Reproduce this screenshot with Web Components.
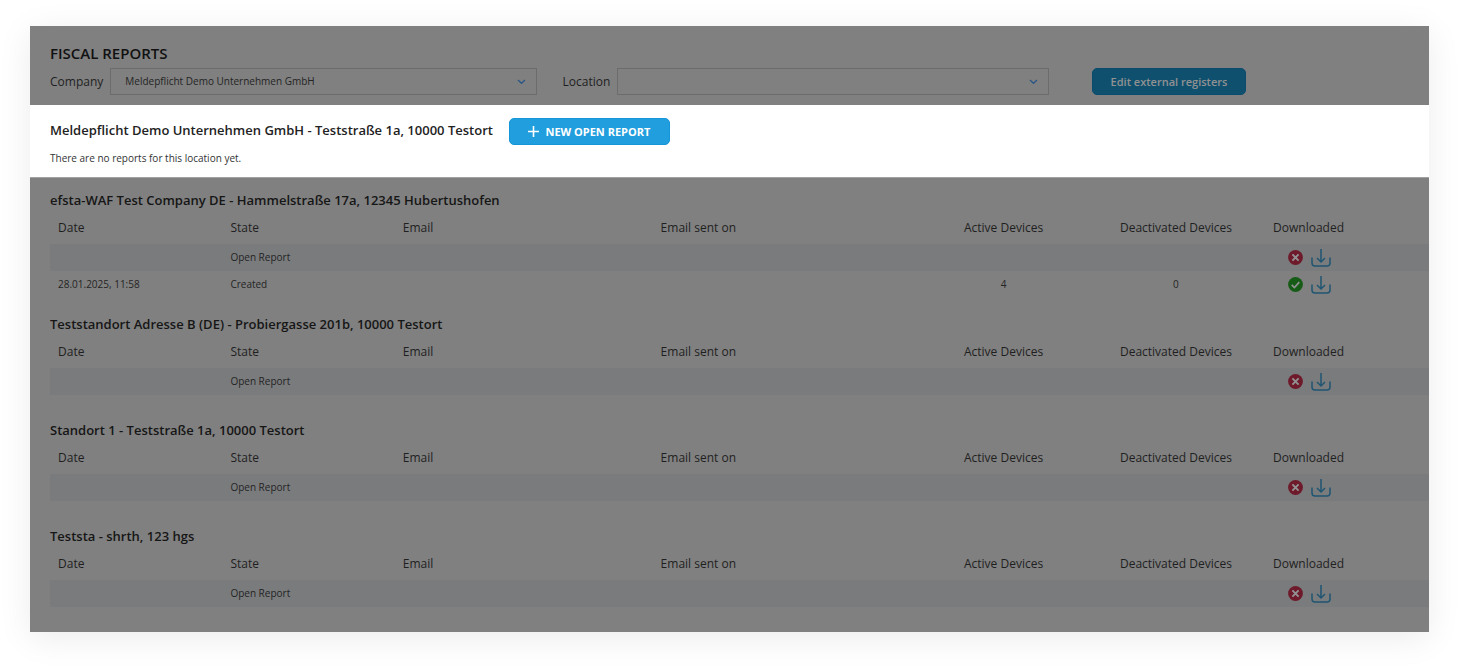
<!DOCTYPE html>
<html lang="en">
<head>
<meta charset="utf-8">
<title>Fiscal Reports</title>
<style>
  body { margin: 0; background: #fff; font-family: "Open Sans", "Noto Sans", sans-serif; color: #1c1c1c; }
</style>
</head>
<body>
<fiscal-page>
  <report-filters slot="filters">
    <select-field label="Company" value="Meldepflicht Demo Unternehmen GmbH"></select-field>
    <select-field label="Location" value=""></select-field>
    <app-button slot="action" muted>Edit external registers</app-button>
  </report-filters>
  <active-location slot="active">
    <span slot="name">Meldepflicht Demo Unternehmen GmbH - Teststraße 1a, 10000 Testort</span>
    <app-button slot="action" plus>NEW OPEN REPORT</app-button>
    <span slot="message">There are no reports for this location yet.</span>
  </active-location>
  <location-reports rows='[["","Open Report","","","","","no"],["28.01.2025, 11:58","Created","","","4","0","yes"]]'>efsta-WAF Test Company DE - Hammelstraße 17a, 12345 Hubertushofen</location-reports>
  <location-reports rows='[["","Open Report","","","","","no"]]'>Teststandort Adresse B (DE) - Probiergasse 201b, 10000 Testort</location-reports>
  <location-reports rows='[["","Open Report","","","","","no"]]'>Standort 1 - Teststraße 1a, 10000 Testort</location-reports>
  <location-reports rows='[["","Open Report","","","","","no"]]'>Teststa - shrth, 123 hgs</location-reports>
</fiscal-page>

<script>
  const define = (name, render) => customElements.define(name, class extends HTMLElement {
    connectedCallback() {
      if (!this.shadowRoot) this.attachShadow({ mode: "open" }).innerHTML = render(this);
    }
  });

  define("fiscal-page", () => `
    <style>
      :host { display: block; padding: 26px 30px 35px; }
      main { background: #808080; box-shadow: 0 6px 32px rgba(0,0,0,.08); }
      .list { padding: 11px 0 1px 20px; border-top: 1px solid #a2a2a2; }
    </style>
    <main>
      <slot name="filters"></slot>
      <slot name="active"></slot>
      <div class="list"><slot></slot></div>
    </main>`);

  define("report-filters", () => `
    <style>
      :host { display: block; padding: 15px 0 10px 20px; }
      h1 { margin: 0; font-size: 15px; line-height: 24px; font-weight: 600; color: #111; }
      .bar { display: flex; align-items: center; margin-top: 3px; }
      .fields { display: flex; flex: 1; gap: 26px; }
      .action { flex: none; width: 380px; padding-left: 43px; box-sizing: border-box; }
    </style>
    <h1>FISCAL REPORTS</h1>
    <div class="bar">
      <div class="fields"><slot></slot></div>
      <div class="action"><slot name="action"></slot></div>
    </div>`);

  define("select-field", el => `
    <style>
      :host { display: flex; flex: 1 1 0; min-width: 0; align-items: center; gap: 7px; }
      label { font-size: 12px; line-height: 26px; color: #1f1f1f; }
      .box { flex: 1; min-width: 0; display: grid; align-items: center; }
      select { grid-area: 1 / 1; appearance: none; width: 100%; height: 27px; margin: 0; padding: 0 32px 2px 14px;
        border: 1px solid #6c6c6c; border-radius: 0; background: #808080; color: #242424; font: 10px/20px "Open Sans", sans-serif; }
      svg { grid-area: 1 / 1; justify-self: end; margin-right: 11px; pointer-events: none; }
    </style>
    <label for="s">${el.getAttribute("label")}</label>
    <div class="box">
      <select id="s"><option>${el.getAttribute("value")}</option></select>
      <svg width="9" height="6" viewBox="0 0 9 6" fill="none" stroke="#2a5684" stroke-width="1.3"><path d="M1 1l3.500 3.300L8 1"/></svg>
    </div>`);

  define("app-button", el => `
    <style>
      :host { display: inline-block; }
      button { display: flex; align-items: center; justify-content: center; gap: 6px; height: 27px; margin: 0; padding: 0 16px;
        border: 1px solid #1496d8; border-radius: 5px; background: #219edd; color: #fff; font: 700 11px/20px "Open Sans", sans-serif; white-space: nowrap; }
      :host([muted]) button { background: #10506f; border-color: #0b4c6e; color: #929292; width: 154px; font-weight: 600; }
      :host([plus]) button { width: 161px; }
      svg { flex: none; }
    </style>
    <button type="button">${el.hasAttribute("plus") ? `<svg width="11" height="11" viewBox="0 0 11 11" stroke="#fff" stroke-width="1.6"><path d="M5.500 0v11M0 5.500h11"/></svg>` : ""}<slot></slot></button>`);

  define("active-location", () => `
    <style>
      :host { display: block; padding: 13px 0 9px 20px; background: #fff; }
      .top { display: flex; align-items: start; gap: 16px; }
      h2 { margin: 0; font-size: 13px; line-height: 25px; font-weight: 600; color: #222; }
      p { margin: 3px 0 0; font-size: 10px; line-height: 20px; color: #333; }
    </style>
    <div class="top"><h2><slot name="name"></slot></h2><slot name="action"></slot></div>
    <p><slot name="message"></slot></p>`);

  define("status-mark", el => {
    const ok = el.hasAttribute("ok");
    return `
    <style>:host { display: block; width: 15px; height: 15px; } svg { display: block; }</style>
    <svg width="15" height="15" viewBox="0 0 15 15" fill="none" role="img" aria-label="${ok ? "Downloaded" : "Not downloaded"}">
      <circle cx="7.500" cy="7.500" r="7.400" fill="${ok ? "#165c16" : "#6e1a2b"}"/>
      ${ok ? `<path d="M3.700 7.900l2.700 2.600 4.900-5.300" stroke="#929292" stroke-width="1.700"/>`
           : `<path d="M4.400 4.400l6.200 6.200M10.600 4.400l-6.200 6.200" stroke="#929292" stroke-width="1.900"/>`}
    </svg>`;
  });

  define("download-button", () => `
    <style>
      :host { display: block; }
      button { display: block; margin: 0; padding: 0; border: 0; background: none; }
      svg { display: block; }
    </style>
    <button type="button" aria-label="Download report">
      <svg width="20" height="18" viewBox="0 0 20 18" fill="none" stroke="#1f5672" stroke-width="1.500">
        <path d="M1 8.500v5.500q0 3 3 3h12q3 0 3-3V8.500M10 0v12.500M6 9l4 4 4-4"/>
      </svg>
    </button>`);

  const heads = ["Date", "State", "Email", "Email sent on", "Active Devices", "Deactivated Devices", "Downloaded"];
  define("location-reports", el => {
    const rows = JSON.parse(el.getAttribute("rows"));
    const cell = (v, i) => i < 6 ? `<td>${v}</td>`
      : `<td><div class="icons"><status-mark ${v === "yes" ? "ok" : ""}></status-mark><download-button></download-button></div></td>`;
    return `
    <style>
      :host { display: block; box-sizing: border-box; min-height: 106px; padding-bottom: 15px; }
      h2 { margin: 0; font-size: 13px; line-height: 23px; padding-bottom: 1px; font-weight: 600; color: #161616; }
      table { width: 100%; table-layout: fixed; border-collapse: collapse; }
      th, td { padding: 0 8px 2px; box-sizing: border-box; text-align: left; white-space: nowrap; }
      th { height: 31px; font-size: 12px; line-height: 20px; font-weight: 400; color: #1f1f1f; }
      td { height: 27px; font-size: 10px; line-height: 20px; color: #242424; }
      tbody tr:nth-child(odd) { background: #7a7b7d; }
      th:nth-child(n+5), td:nth-child(n+5) { padding: 0 0 2px; text-align: center; }
      th:nth-child(7) { padding-right: 74px; }
      td:nth-child(7) { padding: 0 72px 0 0; }
      .icons { display: flex; align-items: center; justify-content: center; gap: 8px; }
      .c1, .c5 { width: 12.500%; }
      .c3 { width: 18.700%; }
      .c4 { width: 19.200%; }
    </style>
    <h2><slot></slot></h2>
    <table>
      <colgroup><col class="c1"><col class="c1"><col class="c3"><col class="c4"><col class="c5"><col class="c5"><col></colgroup>
      <thead><tr>${heads.map(h => `<th scope="col">${h}</th>`).join("")}</tr></thead>
      <tbody>${rows.map(r => `<tr>${r.map(cell).join("")}</tr>`).join("")}</tbody>
    </table>`;
  });
</script>
</body>
</html>
